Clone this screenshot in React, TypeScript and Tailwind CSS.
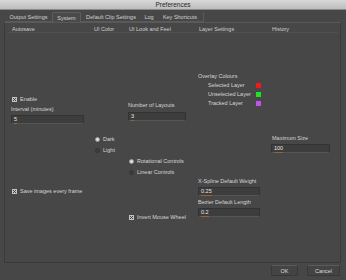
import React from "react";

const Check = () => (
  <div className="w-[5px] h-[5px] bg-[#c4c4c4] flex items-center justify-center shrink-0">
    <svg width="5" height="5" viewBox="0 0 5 5">
      <path d="M1 1 L4 4 M4 1 L1 4" stroke="#3a3a3a" strokeWidth="0.9" />
    </svg>
  </div>
);

const Radio = ({ on }: { on: boolean }) => (
  <div
    className={
      on
        ? "w-[5px] h-[5px] rounded-full bg-[#e0e0e0] border border-[#9a9a9a] shrink-0"
        : "w-[5px] h-[5px] rounded-full bg-[#3c3c3c] border border-[#353535] shrink-0"
    }
  />
);

const Field = ({ value, w }: { value: string; w: string }) => (
  <div className={`${w} h-[9px] bg-[#3d3d3d] border border-[#333333] border-b-[#555555] flex items-center pl-[2px]`}>
    <span className="text-[5.5px] leading-[7px] text-[#e6e6e6] border-b border-[#a0602e]">{value}</span>
  </div>
);

export default function App() {
  return (
    <div
      className="w-[346px] h-[280px] bg-[#474747] flex flex-col overflow-hidden text-[#d6d6d6]"
      style={{ fontFamily: '"Liberation Sans", Arial, sans-serif' }}
    >
      {/* title bar */}
      <div className="h-[10px] bg-gradient-to-b from-[#d8d8d8] to-[#bdbdbd] border-b border-[#8a8a8a] flex items-center justify-center">
        <span className="text-[6.5px] leading-[8px] text-[#262626]">Preferences</span>
      </div>

      {/* tabs */}
      <div className="flex ml-[5px] mt-[2px] h-[10px] text-[5.5px] leading-[8px] text-[#d0d0d0]">
        <div className="w-[47px] flex items-center justify-center border-b border-[#5a5a5a]">Output Settings</div>
        <div className="w-[29px] flex items-center justify-center border border-b-0 border-[#5e5e5e] rounded-t-[2px] bg-[#4a4a4a]">System</div>
        <div className="w-[60px] flex items-center justify-center border-b border-[#5a5a5a]">Default Clip Settings</div>
        <div className="w-[16px] flex items-center justify-center border-b border-[#5a5a5a]">Log</div>
        <div className="w-[47px] flex items-center justify-center border-r border-b border-[#5a5a5a] rounded-tr-[2px]">Key Shortcuts</div>
        <div className="flex-1" />
      </div>

      {/* panel */}
      <div className="ml-[4px] w-[337px] h-[241px] border border-[#3a3a3a] border-t-[#595959] flex flex-col">
        <div className="mt-[2px] mx-[2px] h-[8px] flex text-[5.5px] leading-[8px] text-[#cfcfcf] border-b border-[#505050]">
          <div className="w-[3px]" />
          <div className="w-[82px] pl-[2px]">Autosave</div>
          <div className="w-[35px] pl-[2px]">UI Color</div>
          <div className="w-[70px] pl-[2px]">UI Look and Feel</div>
          <div className="w-[73px] pl-[2px]">Layer Settings</div>
          <div className="flex-1 pl-[2px]">History</div>
        </div>

        <div className="flex flex-1 text-[5.5px] leading-[8px] text-[#d6d6d6]">
          <div className="w-[1px]" />
          {/* Autosave */}
          <div className="w-[82px] flex flex-col">
            <div className="mt-[62px] ml-[6px] h-[8px] flex items-center gap-[3px]">
              <Check />
              <span>Enable</span>
            </div>
            <div className="mt-[2px] ml-[5px] h-[8px]">Interval (minutes)</div>
            <div className="mt-[2px] ml-[5px]">
              <Field value="5" w="w-[73px]" />
            </div>
            <div className="mt-[63px] ml-[6px] h-[8px] flex items-center gap-[3px]">
              <Check />
              <span>Save images every frame</span>
            </div>
          </div>

          {/* UI Color */}
          <div className="w-[35px] flex flex-col">
            <div className="mt-[102px] ml-[7px] h-[8px] flex items-center gap-[3px]">
              <Radio on />
              <span>Dark</span>
            </div>
            <div className="mt-[3px] ml-[7px] h-[8px] flex items-center gap-[3px]">
              <Radio on={false} />
              <span>Light</span>
            </div>
          </div>

          {/* UI Look and Feel */}
          <div className="w-[70px] flex flex-col">
            <div className="mt-[68px] ml-[5px] h-[8px]">Number of Layouts</div>
            <div className="mt-[3px] ml-[5px]">
              <Field value="3" w="w-[58px]" />
            </div>
            <div className="mt-[36px] ml-[6px] h-[8px] flex items-center gap-[3px]">
              <Radio on />
              <span>Rotational Controls</span>
            </div>
            <div className="mt-[3px] ml-[6px] h-[8px] flex items-center gap-[3px]">
              <Radio on={false} />
              <span>Linear Controls</span>
            </div>
            <div className="mt-[37px] ml-[6px] h-[8px] flex items-center gap-[3px]">
              <Check />
              <span>Invert Mouse Wheel</span>
            </div>
          </div>

          {/* Layer Settings */}
          <div className="w-[73px] flex flex-col">
            <div className="mt-[39px] ml-[5px] h-[8px]">Overlay Colours</div>
            <div className="mt-[1px] ml-[15px] h-[8px] flex items-center">
              <span className="w-[48px]">Selected Layer</span>
              <div className="w-[5px] h-[5px] bg-[#ee1b1b]" />
            </div>
            <div className="mt-[1px] ml-[15px] h-[8px] flex items-center">
              <span className="w-[48px]">Unselected Layer</span>
              <div className="w-[5px] h-[5px] bg-[#22e02a]" />
            </div>
            <div className="mt-[1px] ml-[15px] h-[8px] flex items-center">
              <span className="w-[48px]">Tracked Layer</span>
              <div className="w-[5px] h-[5px] bg-[#c054e6]" />
            </div>
            <div className="mt-[70px] ml-[5px] h-[8px]">X-Spline Default Weight</div>
            <div className="mt-[2px] ml-[5px]">
              <Field value="0.25" w="w-[62px]" />
            </div>
            <div className="mt-[2px] ml-[5px] h-[8px]">Bezier Default Length</div>
            <div className="mt-[2px] ml-[5px]">
              <Field value="0.2" w="w-[62px]" />
            </div>
          </div>

          {/* History */}
          <div className="flex-1 flex flex-col">
            <div className="mt-[101px] ml-[6px] h-[8px]">Maximum Size</div>
            <div className="mt-[2px] ml-[5px]">
              <Field value="100" w="w-[59px]" />
            </div>
          </div>
        </div>
      </div>

      {/* buttons */}
      <div className="flex justify-end mt-[2px] mr-[6px] gap-[9px] text-[5.5px] leading-[8px] text-[#dcdcdc]">
        <div className="w-[27px] h-[11px] flex items-center justify-center bg-[#444444] border border-[#383838] border-t-[#5a5a5a]">OK</div>
        <div className="w-[33px] h-[11px] flex items-center justify-center bg-[#444444] border border-[#383838] border-t-[#5a5a5a]">Cancel</div>
      </div>
    </div>
  );
}
